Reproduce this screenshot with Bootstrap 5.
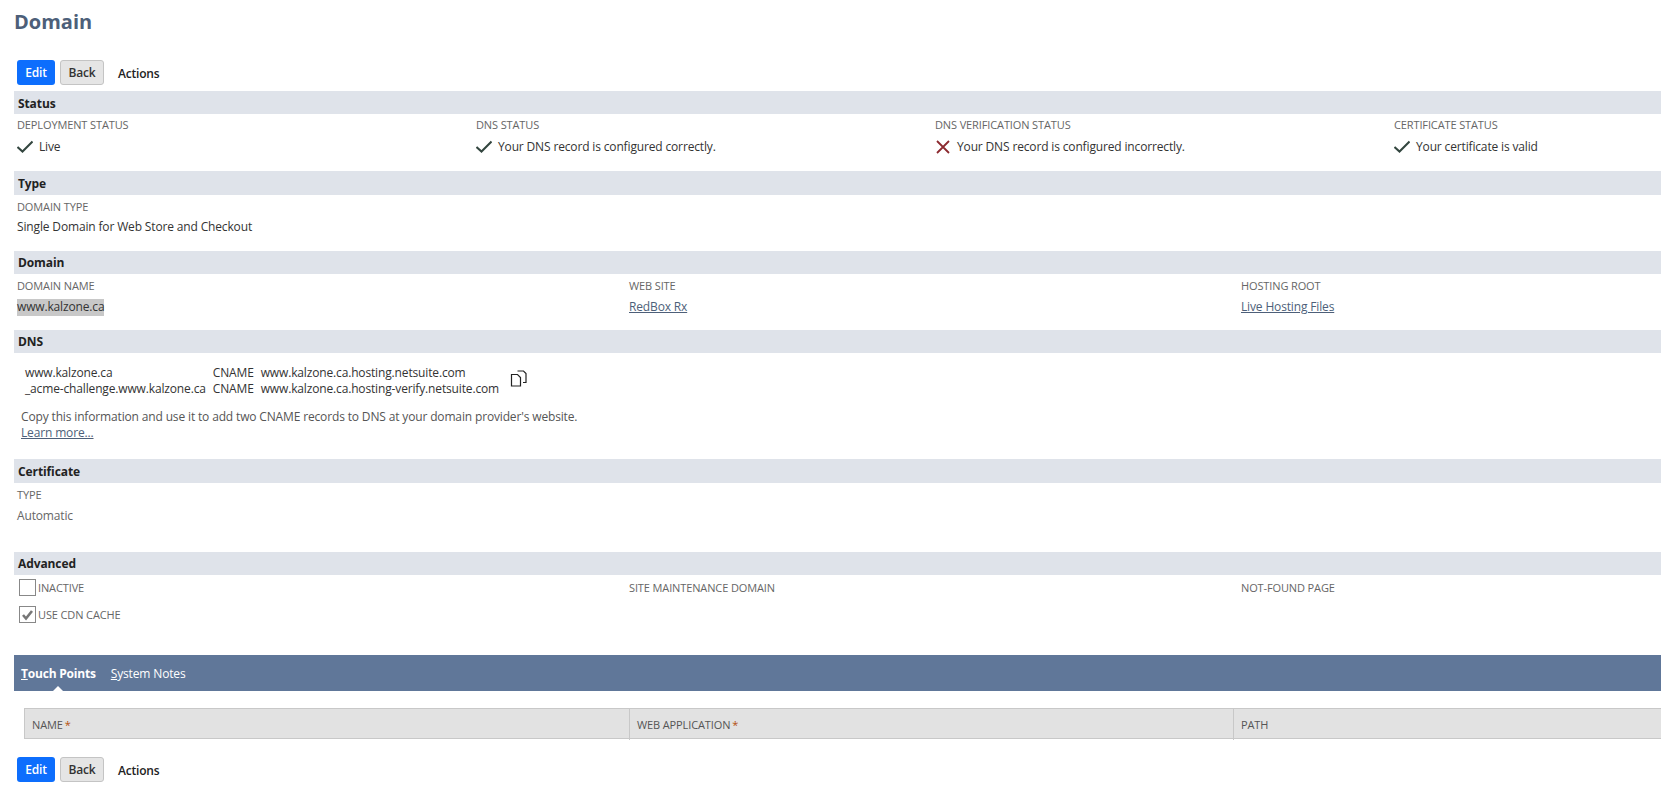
<!DOCTYPE html>
<html lang="en"><head><meta charset="utf-8"><title>Domain</title>
<link href="https://cdn.jsdelivr.net/npm/bootstrap@5.3.0/dist/css/bootstrap.min.css" rel="stylesheet">
<style>
html,body{overflow:hidden;background:#fff}
body{font-family:"Open Sans","Liberation Sans",sans-serif;font-size:12px;color:#333;line-height:16px;letter-spacing:-.15px}
.page-title{font-size:20px;font-weight:700;color:#4d5f79;line-height:27px;margin:0;padding:8px 0 0 14px;height:60px;letter-spacing:0}
.btn-strip{height:31px;padding-left:17px;align-items:flex-start;gap:5px}
.btn-strip.lower{height:auto}
.nbtn{font-size:12px;font-weight:600;line-height:16px;padding:3px 0;height:25px;border-radius:3px;border:1px solid transparent;letter-spacing:-.2px}
.nbtn-edit{background:#0d6efd;color:#fff;width:38px}
.nbtn-back{background:#e5e5e5;border-color:#c4c4c4;color:#333;width:44px}
.nbtn-act{background:none;color:#222;padding:2px 0 0 8px}
.sect-wrap{margin-left:14px}
.sect-bar{background:#dfe3ea;font-weight:700;color:#222;height:23px;line-height:24px;padding-left:4px;font-size:12px;letter-spacing:-.1px}
.sect-bar.tall{height:24px;line-height:25px}
.sect-bar.low{line-height:25px}
.sect-body{padding:3px 0 0 3px}
.h-status{height:57px}.h-type{height:56px}.h-dns{height:106px}.h-cert{height:69px}.h-adv{height:81px}
.cols-four{display:grid;grid-template-columns:459px 459px 459px 1fr}
.cols-three{display:grid;grid-template-columns:612px 612px 1fr}
.fld-label{font-size:11px;color:#666;text-transform:uppercase;line-height:16px;margin-bottom:6px;letter-spacing:-.12px}
.fld-value{line-height:16px;color:#333;display:flex;align-items:center;gap:6px}
.pad-one{padding-top:4px}
.pad-one .fld-label{margin-bottom:5px}
.pad-two{padding-top:4px}
.pad-two .fld-label{margin-bottom:4px}
.mute{color:#666}
.sel{background:#c8c8c8;height:17px;display:inline-block}
a.plain{color:#4d5f79;text-decoration:underline}
.dns-block{padding:12px 0 0 11px;display:flex;align-items:center;gap:4px}
.dns-table{border-collapse:collapse}
.dns-table td{padding:0 7px 0 0;line-height:16px;color:#333;white-space:nowrap}
.dns-block svg{margin-top:-5px}
.dns-note{padding:12px 0 0 7px;color:#555}
.chk{display:inline-block;width:17px;height:17px;border:1px solid #888;background:#fff;margin:0 2px 0 2px;flex:none}
.chk-row{display:flex;align-items:center;height:17px;font-size:11px;color:#666;text-transform:uppercase;letter-spacing:-.12px;margin-bottom:10px}
.adv-col .fld-label{margin-top:1px}
.tab-strip{background:#607799;height:36px;margin-left:14px;margin-top:-1px;padding:1px 0 0 7px;display:flex;gap:15px;align-items:center;color:#fff;position:relative}
.tab-strip .on{font-weight:700;position:relative;letter-spacing:-.2px}
.tab-strip .on::after{content:"";position:absolute;left:50%;margin-left:-6px;bottom:-10px;border:6px solid transparent;border-top:0;border-bottom-color:#fff}
.grid-head{margin:17px 0 18px 24px;display:grid;grid-template-columns:604px 604px 1fr;height:31px;background:#e2e2e2;border:1px solid #c8c8c8;border-right:0;font-size:11px;color:#555;text-transform:uppercase;letter-spacing:-.12px}
.grid-head>div{padding:0 7px;line-height:31px;border-left:1px solid #c8c8c8}
.grid-head>div:first-child{border-left:0}
.req{color:#b4500f;margin-left:2px}
</style></head><body>
<h1 class="page-title">Domain</h1>
<div class="d-flex btn-strip">
<button class="nbtn nbtn-edit">Edit</button><button class="nbtn nbtn-back">Back</button><button class="nbtn nbtn-act">Actions</button>
</div>
<div class="sect-wrap">
<div class="sect-bar low">Status</div>
<div class="sect-body h-status"><div class="cols-four">
<div><div class="fld-label">Deployment Status</div><div class="fld-value"><svg width="16" height="14" viewBox="0 0 16 14"><path d="M.5 7l5 4.500L15.500 1.500" fill="none" stroke="#33463f" stroke-width="2"/></svg>Live</div></div>
<div><div class="fld-label">DNS Status</div><div class="fld-value"><svg width="16" height="14" viewBox="0 0 16 14"><path d="M.5 7l5 4.500L15.500 1.500" fill="none" stroke="#33463f" stroke-width="2"/></svg>Your DNS record is configured correctly.</div></div>
<div><div class="fld-label">DNS Verification Status</div><div class="fld-value"><svg width="16" height="14" viewBox="0 0 16 14"><path d="M2 1l12 12M14 1L2 13" fill="none" stroke="#8c2a2f" stroke-width="1.800"/></svg>Your DNS record is configured incorrectly.</div></div>
<div><div class="fld-label">Certificate Status</div><div class="fld-value"><svg width="16" height="14" viewBox="0 0 16 14"><path d="M.5 7l5 4.500L15.500 1.500" fill="none" stroke="#33463f" stroke-width="2"/></svg>Your certificate is valid</div></div>
</div></div>
<div class="sect-bar tall">Type</div>
<div class="sect-body pad-two h-type"><div class="fld-label">Domain Type</div><div class="fld-value">Single Domain for Web Store and Checkout</div></div>
<div class="sect-bar">Domain</div>
<div class="sect-body pad-one h-type"><div class="cols-three">
<div><div class="fld-label">Domain Name</div><span class="sel">www.kalzone.ca</span></div>
<div><div class="fld-label">Web Site</div><a class="plain" href="#">RedBox Rx</a></div>
<div><div class="fld-label">Hosting Root</div><a class="plain" href="#">Live Hosting Files</a></div>
</div></div>
<div class="sect-bar">DNS</div>
<div class="h-dns">
<div class="dns-block"><table class="dns-table"><tr><td>www.kalzone.ca</td><td>CNAME</td><td>www.kalzone.ca.hosting.netsuite.com</td></tr><tr><td>_acme-challenge.www.kalzone.ca</td><td>CNAME</td><td>www.kalzone.ca.hosting-verify.netsuite.com</td></tr></table>
<svg width="17" height="17" viewBox="0 0 17 17"><path d="M7.500 1h6L16 3.500V12.500h-3" fill="none" stroke="#222" stroke-width="1.200"/><path d="M1.500 4.500h6l3 3v8.500h-9z" fill="#fff" stroke="#222" stroke-width="1.200"/></svg></div>
<div class="dns-note">Copy this information and use it to add two CNAME records to DNS at your domain provider's website.<br><a class="plain" href="#">Learn more...</a></div>
</div>
<div class="sect-bar tall">Certificate</div>
<div class="sect-body pad-one h-cert"><div class="fld-label">Type</div><div class="fld-value mute">Automatic</div></div>
<div class="sect-bar">Advanced</div>
<div class="sect-body pad-one h-adv"><div class="cols-three adv-col">
<div><div class="chk-row"><span class="chk"></span>Inactive</div>
<div class="chk-row"><span class="chk d-flex align-items-center justify-content-center"><svg width="13" height="12" viewBox="0 0 13 12"><path d="M2 6l3 3.500L11 2" fill="none" stroke="#777" stroke-width="2.600"/></svg></span>Use CDN Cache</div></div>
<div><div class="fld-label">Site Maintenance Domain</div></div>
<div><div class="fld-label">Not-Found Page</div></div>
</div></div>
</div>
<div class="tab-strip"><span class="on"><u>T</u>ouch Points</span><span><u>S</u>ystem Notes</span></div>
<div class="grid-head"><div>Name<span class="req">*</span></div><div>Web Application<span class="req">*</span></div><div>Path</div></div>
<div class="d-flex btn-strip lower">
<button class="nbtn nbtn-edit">Edit</button><button class="nbtn nbtn-back">Back</button><button class="nbtn nbtn-act">Actions</button>
</div>
<script src="https://cdn.jsdelivr.net/npm/bootstrap@5.3.0/dist/js/bootstrap.bundle.min.js"></script>
</body></html>
